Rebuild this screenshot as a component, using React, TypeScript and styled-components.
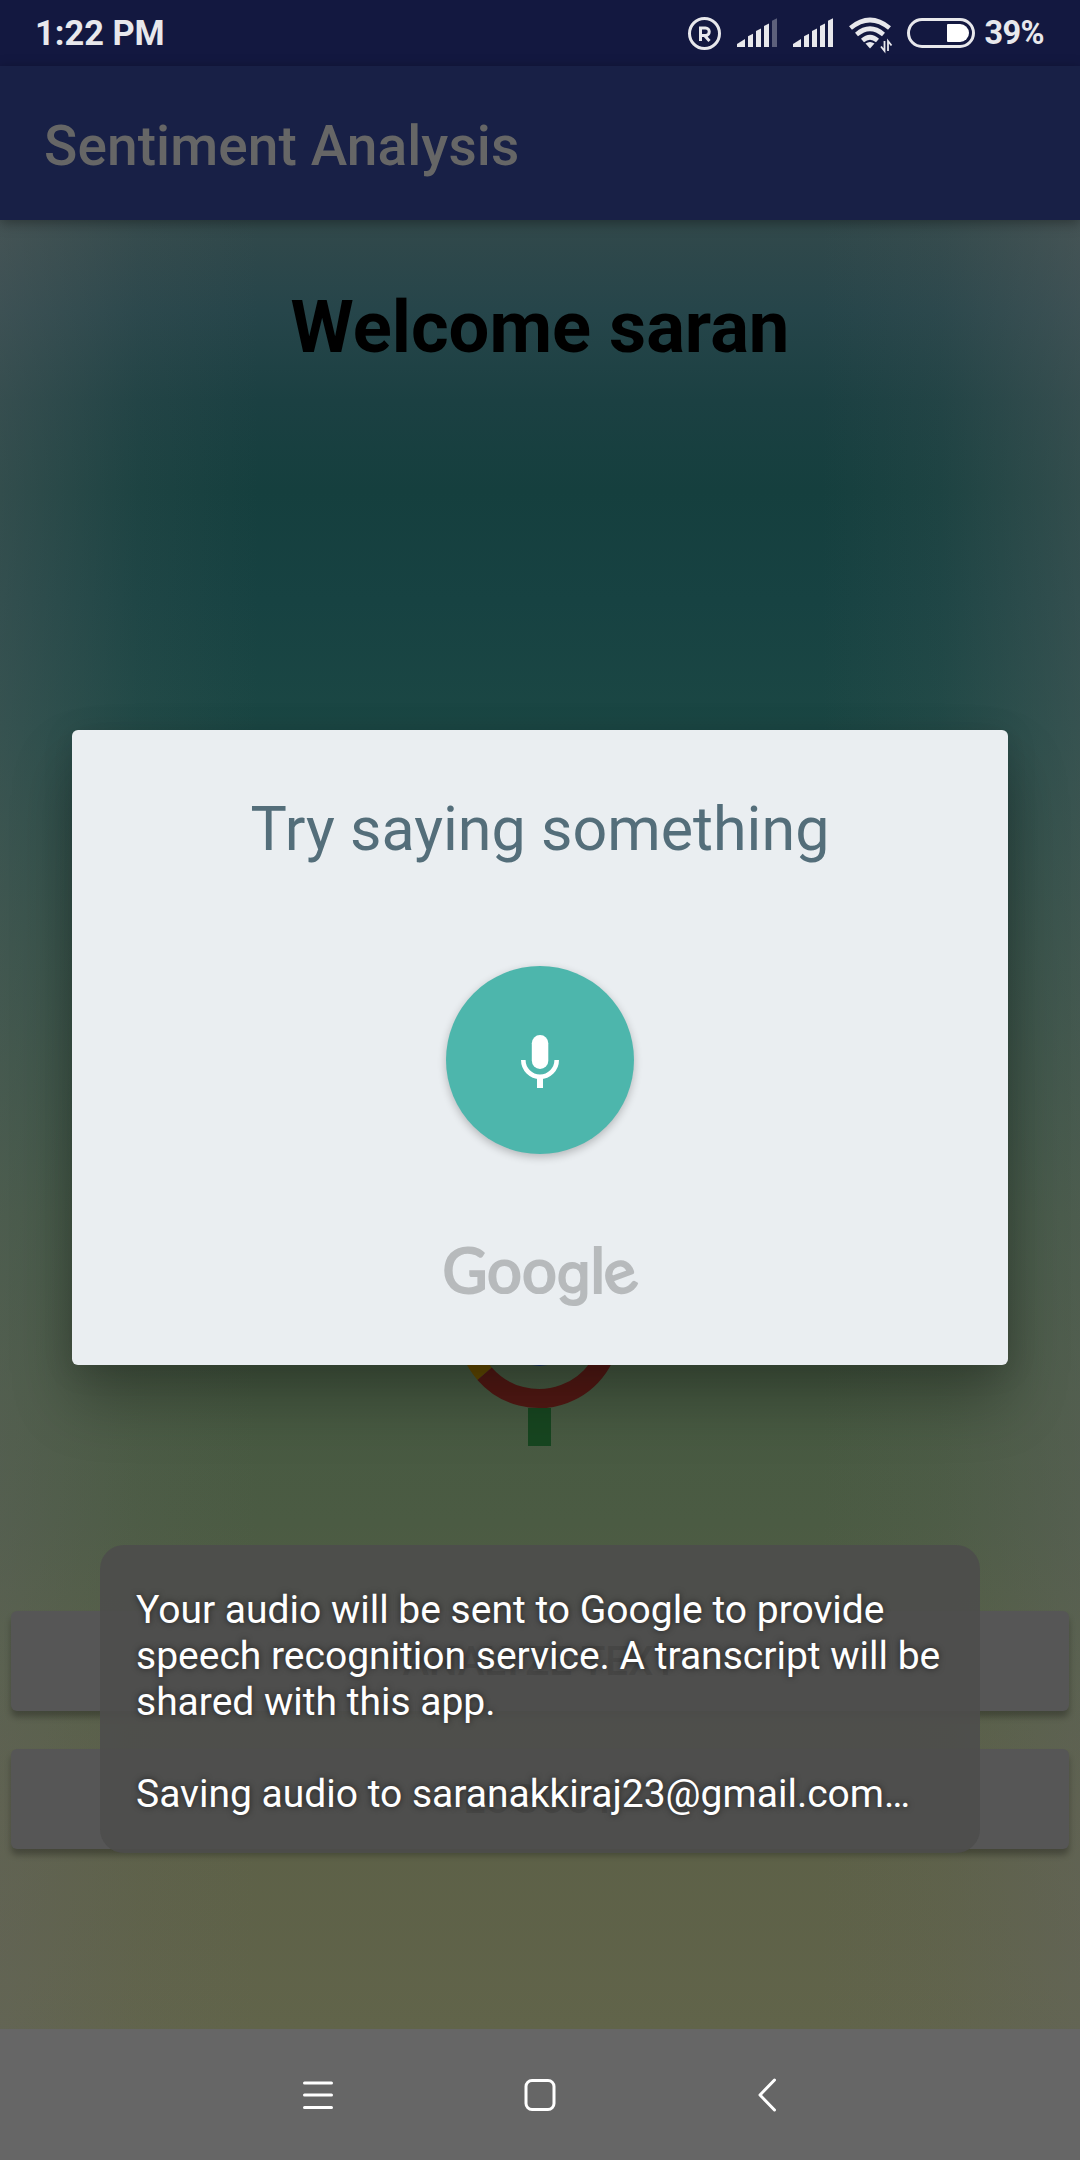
import React from "react";
import styled, { createGlobalStyle } from "styled-components";

const GlobalStyle = createGlobalStyle`
  * { box-sizing: border-box; }
  body { margin: 0; background: #666; font-family: Roboto, "Liberation Sans", sans-serif; }
`;

const Phone = styled.main`
  position: relative;
  display: flex;
  flex-direction: column;
  width: 1080px;
  height: 2160px;
  overflow: hidden;
`;

const StatusBar = styled.header`
  display: flex;
  align-items: center;
  justify-content: space-between;
  height: 66px;
  padding: 0 36px 0 35px;
  background: #131840;
  color: #e8e8ec;
  font-size: 34.4px;
  font-weight: 700;
  line-height: 66px;
`;

const StatusIcons = styled.div`
  display: flex;
  align-items: center;
`;

const StatusGlyphs = styled.svg`
  display: block;
  width: 290px;
  height: 66px;
  margin-right: 7px;
`;

const BatteryLevel = styled.span`
  font-size: 32.5px;
  letter-spacing: -0.6px;
`;

const AppBar = styled.div`
  z-index: 1;
  display: flex;
  align-items: center;
  height: 154px;
  padding: 6px 44px 0;
  background: #182046;
  box-shadow: 0 3px 12px rgba(0, 0, 0, 0.35);
`;

const AppTitle = styled.h1`
  margin: 0;
  color: #666;
  font-size: 55px;
  font-weight: 500;
  letter-spacing: 0.1px;
`;

const Content = styled.section`
  display: flex;
  flex-direction: column;
  align-items: center;
  height: 1809px;
  background:
    linear-gradient(90deg, rgba(102, 102, 102, 0.36) 0, rgba(102, 102, 102, 0.24) 6%, rgba(102, 102, 102, 0.1) 13%, rgba(102, 102, 102, 0) 24%, rgba(102, 102, 102, 0) 76%, rgba(102, 102, 102, 0.1) 87%, rgba(102, 102, 102, 0.24) 94%, rgba(102, 102, 102, 0.36) 100%),
    linear-gradient(180deg, #32494b 0, #26454a 5%, #1b4042 10%, #153f3e 15%, #174242 21%, #1b4744 28%, #2b4e43 40%, #3e5741 55%, #475a42 65%, #4b5b43 72%, #555f45 80%, #5c6047 88%, #61644a 100%);
`;

const Welcome = styled.h2`
  margin: 66px 0 0;
  color: #000;
  font-size: 72.3px;
  font-weight: 700;
  line-height: 84px;
`;

const MicPicture = styled.svg`
  display: block;
  width: 320px;
  height: 320px;
  margin-top: 756px;
`;

const Actions = styled.div`
  display: flex;
  flex-direction: column;
  gap: 38px;
  width: 100%;
  margin-top: 165px;
  padding: 0 11px;
`;

const ActionButton = styled.button`
  height: 100px;
  border: 0;
  border-radius: 6px;
  background: #565656;
  box-shadow: 0 6px 6px rgba(0, 0, 0, 0.28);
  color: #000;
  font-family: inherit;
  font-size: 40px;
  font-weight: 500;
`;

const NavBar = styled.nav`
  display: grid;
  grid-template-columns: repeat(3, 222px);
  justify-content: center;
  align-items: center;
  justify-items: center;
  height: 131px;
  background: #666;
`;

const NavIcon = styled.svg`
  display: block;
  width: 60px;
  height: 60px;
  fill: none;
  stroke: #fff;
  stroke-width: 3;
  stroke-linecap: round;
  stroke-linejoin: round;
`;

const Dialog = styled.section`
  position: absolute;
  z-index: 2;
  top: 730px;
  left: 72px;
  display: flex;
  flex-direction: column;
  align-items: center;
  width: 936px;
  height: 635px;
  border-radius: 6px;
  background: #eaeef1;
  box-shadow: 0 36px 60px rgba(0, 0, 0, 0.26), 0 4px 30px rgba(0, 0, 0, 0.13);
`;

const Prompt = styled.p`
  margin: 63px 0 0;
  color: #546e7a;
  font-size: 61px;
  line-height: 72px;
`;

const MicButton = styled.button`
  display: flex;
  align-items: center;
  justify-content: center;
  width: 188px;
  height: 188px;
  margin-top: 101px;
  padding: 0;
  border: 0;
  border-radius: 50%;
  background: #4db6ac;
  box-shadow: 0 3px 8px rgba(0, 0, 0, 0.24);
`;

const Brand = styled.div`
  margin-top: 76px;
  color: #b7babc;
  font-family: Lato, "Open Sans", sans-serif;
  font-size: 61.5px;
  font-weight: 400;
  line-height: 78px;
  -webkit-text-stroke: 2.2px #b7babc;
`;

const BrandDescender = styled.span`
  font-family: Inter, Roboto, sans-serif;
  font-size: 55px;
  line-height: 0;
`;

const BrandTilt = styled.span`
  display: inline-block;
  line-height: 1;
  transform: rotate(-20deg);
  transform-origin: 50% 66%;
`;

const Toast = styled.aside`
  position: absolute;
  z-index: 3;
  top: 1545px;
  left: 100px;
  width: 880px;
  height: 308px;
  padding: 42px 36px;
  border-radius: 24px;
  background: rgba(77, 77, 76, 0.91);
  color: #fff;
  font-size: 39px;
  line-height: 46px;
  text-shadow: 0 0 6px rgba(0, 0, 0, 0.6);
  white-space: pre;
`;

const bars = [0, 1, 2, 3, 4];

function Signal({ x, weak }: { x: number; weak?: boolean }) {
  return (
    <g fill="#e8e8ec">
      {bars.map((i) => {
        const left = x + 3 + i * 8;
        const top = 39 - i * 5.2;
        return (
          <path
            key={i}
            opacity={weak && i === 4 ? 0.35 : 1}
            d={i === 0 ? `M${x} 47V44L${x + 8} 39V47Z` : `M${left} 47V${top + 2.5}L${left + 5} ${top}V47Z`}
          />
        );
      })}
    </g>
  );
}

export default function App() {
  return (
    <>
      <GlobalStyle />
      <Phone>
        <StatusBar>
          <span>1:22 PM</span>
          <StatusIcons>
            <StatusGlyphs viewBox="687 0 290 66">
              <circle cx="704.5" cy="33.5" r="15" fill="none" stroke="#e8e8ec" strokeWidth="3" />
              <path d="M700.5 41V28H705.5A3.7 3.7 0 0 1 705.5 35.5H700.5M705 36L709.5 41" fill="none" stroke="#e8e8ec" strokeWidth="3" />
              <Signal x={737} weak />
              <Signal x={793} />
              <g fill="none" stroke="#e8e8ec" strokeWidth="4.6">
                <path d="M850.5 28Q870 12 889.5 28" />
                <path d="M856.5 34.5Q870 23 883.5 34.5" />
                <path d="M862.5 40.5Q870 34 877.5 40.5" />
              </g>
              <path d="M870 48.5L865.5 43.5Q870 40.5 874.5 43.5Z" fill="#e8e8ec" />
              <path d="M884.5 41V51L881 46.5M888 51V41L891.5 45.5" fill="none" stroke="#e8e8ec" strokeWidth="1.8" />
              <rect x="908.5" y="19.5" width="65" height="27" rx="13.5" fill="none" stroke="#e8e8ec" strokeWidth="3" />
              <path d="M948 24H960A9 9 0 0 1 960 42H948Q947 42 947 41V25Q947 24 948 24Z" fill="#fff" />
            </StatusGlyphs>
            <BatteryLevel>39%</BatteryLevel>
          </StatusIcons>
        </StatusBar>
        <AppBar>
          <AppTitle>Sentiment Analysis</AppTitle>
        </AppBar>
        <Content>
          <Welcome>Welcome saran</Welcome>
          <MicPicture viewBox="380 1126 320 320">
            <rect x="504" y="1130" width="71" height="236" rx="35.5" fill="#1a3566" />
            <g fill="none" strokeWidth="19">
              <path d="M467 1326.5A72 72 0 0 0 484.6 1373.7" stroke="#644b02" />
              <path d="M484.6 1373.7A72 72 0 0 0 611 1326.5" stroke="#531914" />
            </g>
            <rect x="528" y="1408" width="23" height="38" fill="#174620" />
          </MicPicture>
          <Actions>
            <ActionButton>ANALYZE TEXT</ActionButton>
            <ActionButton>LOGOUT</ActionButton>
          </Actions>
        </Content>
        <NavBar>
          <NavIcon viewBox="0 0 60 60"><path d="M16.500 18H43.500M16.500 30H43.500M16.500 42.500H43.500" /></NavIcon>
          <NavIcon viewBox="0 0 60 60"><rect x="16" y="15.5" width="28" height="29" rx="6" /></NavIcon>
          <NavIcon viewBox="0 0 60 60"><path d="M42.500 15L28 30L42.500 45" /></NavIcon>
        </NavBar>
        <Dialog>
          <Prompt>Try saying something</Prompt>
          <MicButton aria-label="Speak">
            <svg width="72" height="72" viewBox="504 1024 72 72">
              <rect x="531.8" y="1035" width="16.5" height="34" rx="8.2" fill="#fff" />
              <path d="M523.3 1060A16.7 16.7 0 0 0 556.7 1060" fill="none" stroke="#fff" strokeWidth="4.6" />
              <path d="M540 1077V1088" stroke="#fff" strokeWidth="6" />
            </svg>
          </MicButton>
          <Brand>Goo<BrandDescender>g</BrandDescender>l<BrandTilt>e</BrandTilt></Brand>
        </Dialog>
        <Toast>{"Your audio will be sent to Google to provide\nspeech recognition service. A transcript will be\nshared with this app.\n\nSaving audio to saranakkiraj23@gmail.com…"}</Toast>
      </Phone>
    </>
  );
}
